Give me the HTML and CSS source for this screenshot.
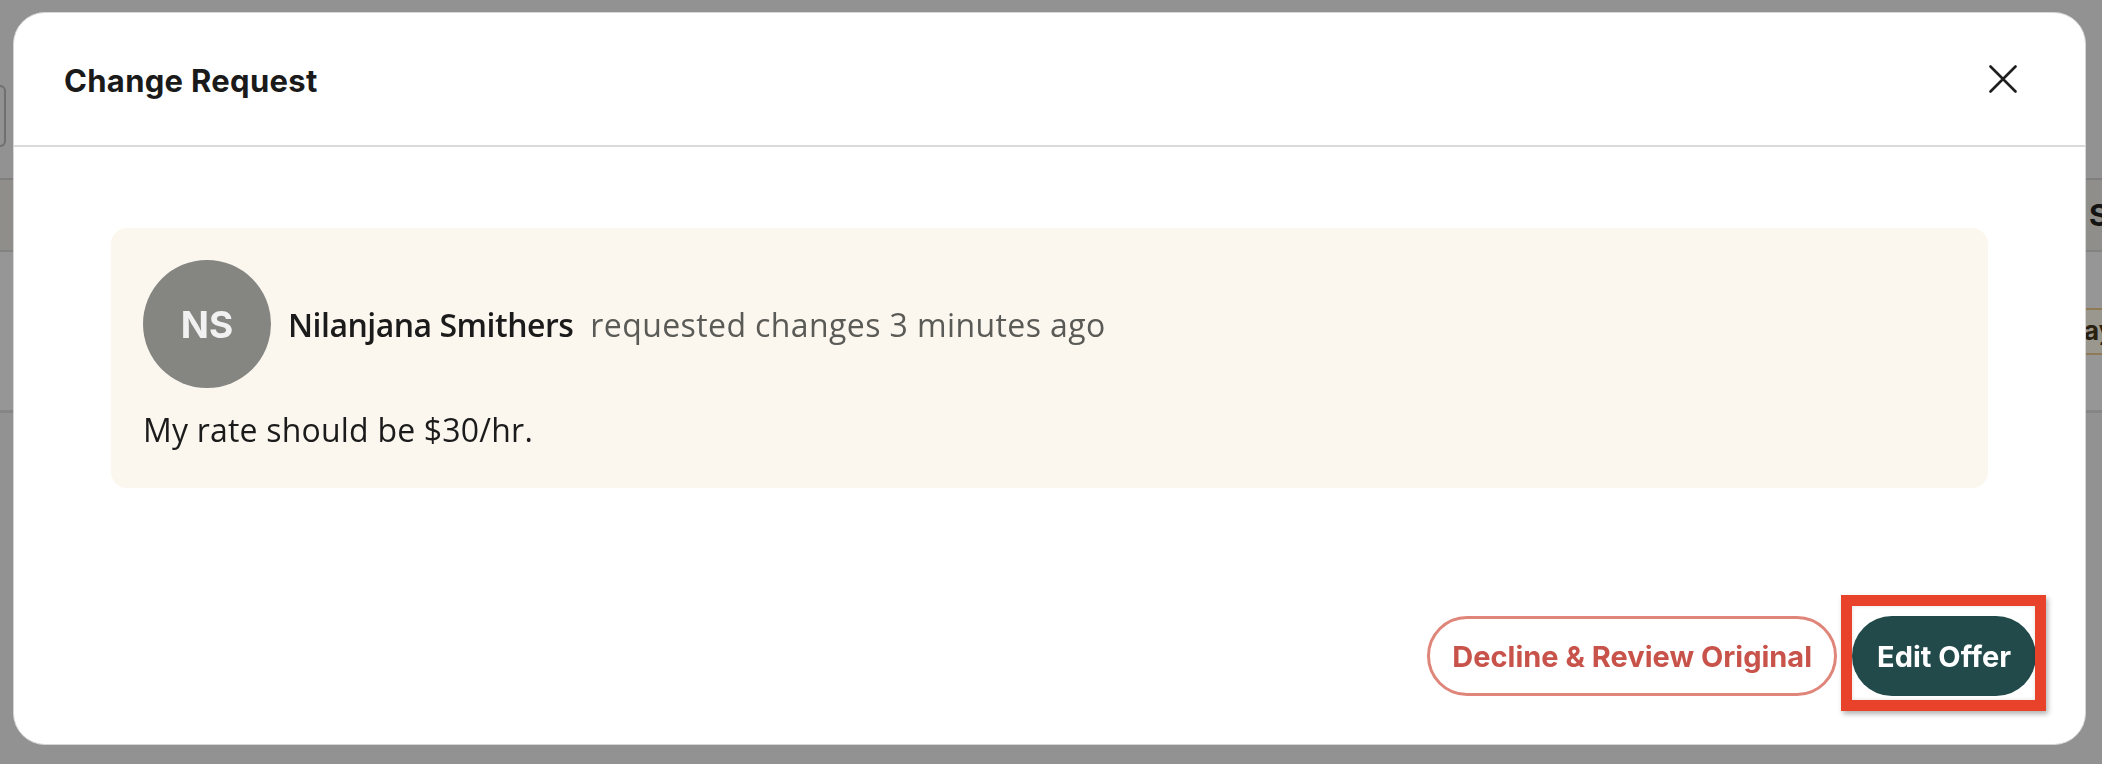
FILE: index.html
```html
<!DOCTYPE html>
<html lang="en">
<head>
<meta charset="utf-8">
<title>Change Request</title>
<link rel="stylesheet" href="styles.css">
</head>
<body>
<div class="page">
  <div class="toolbar"><div class="tool-pill"></div></div>
  <div class="table">
    <div class="thead"><span class="th-right">S</span></div>
    <div class="trow"><span class="tag">ay</span></div>
  </div>
</div>

<div class="modal" role="dialog" aria-labelledby="dlg-title">
  <header class="modal-header">
    <h1 id="dlg-title" class="modal-title">Change Request</h1>
    <button class="close-btn" aria-label="Close">
      <svg width="28" height="28" viewBox="0 0 28 28" fill="none" stroke="#1e1e1e" stroke-width="2.6" stroke-linecap="round"><path d="M1.5 1.5 L26.5 26.5 M26.5 1.5 L1.5 26.5"/></svg>
    </button>
  </header>
  <div class="modal-body">
    <div class="request-card">
      <div class="request-head">
        <div class="avatar">NS</div>
        <span class="author">Nilanjana Smithers</span>
        <span class="meta">requested changes 3 minutes ago</span>
      </div>
      <p class="message">My rate should be $30/hr.</p>
    </div>
  </div>
  <footer class="modal-footer">
    <button class="btn btn-outline">Decline &amp; Review Original</button>
    <div class="highlight-wrap">
      <button class="btn btn-primary">Edit Offer</button>
      <span class="highlight"></span>
    </div>
  </footer>
</div>
</body>
</html>
```
FILE: styles.css
```css
html, body {
  margin: 0;
  padding: 0;
}
body {
  width: 2102px;
  height: 764px;
  overflow: hidden;
  background: #929292;
  font-family: "Open Sans", "Noto Sans", sans-serif;
}

/* underlying page (already dimmed by overlay) */
.page {
  height: 764px;
}
.toolbar {
  height: 178px;
  padding-top: 85px;
  box-sizing: border-box;
}
.tool-pill {
  width: 6px;
  height: 62px;
  border: 2px solid #6f6f6f;
  border-left: none;
  border-radius: 0 10px 10px 0;
  box-sizing: border-box;
}
.table {
  border-top: 2px solid #7f7f7f;
}
.thead {
  height: 70px;
  background: #8f8e8b;
  border-bottom: 2px solid #838383;
  display: flex;
  justify-content: flex-end;
  align-items: center;
}
.th-right {
  font-family: Inter, sans-serif;
  font-weight: 700;
  font-size: 30px;
  color: #141414;
  width: 13px;
  overflow: hidden;
}
.trow {
  height: 161px;
  background: #969696;
  border-bottom: 3px solid #858585;
  display: flex;
  justify-content: flex-end;
  padding-top: 56px;
  box-sizing: border-box;
}
.tag {
  height: 47px;
  width: 18px;
  box-sizing: border-box;
  border-top: 2px solid #8e7b55;
  border-bottom: 2px solid #8e7b55;
  background: #9a978f;
  font-family: Inter, sans-serif;
  font-weight: 700;
  font-size: 26px;
  color: #2a2010;
  line-height: 42px;
  overflow: hidden;
  white-space: nowrap;
}

/* modal */
.modal {
  position: fixed;
  left: 13px;
  top: 12px;
  width: 2073px;
  height: 733px;
  box-sizing: border-box;
  background: #ffffff;
  border: 1px solid #d6d6d6;
  border-radius: 32px;
  display: flex;
  flex-direction: column;
}
.modal-header {
  height: 134px;
  box-sizing: border-box;
  border-bottom: 2px solid #dadada;
  display: flex;
  align-items: center;
  justify-content: space-between;
  padding: 0 68px 0 50px;
  flex-shrink: 0;
}
.modal-title {
  margin: 3px 0 0;
  font-family: Inter, sans-serif;
  font-weight: 700;
  font-size: 31px;
  color: #1a1a1a;
  letter-spacing: 0.3px;
}
.close-btn {
  background: none;
  border: none;
  padding: 0;
  width: 28px;
  height: 28px;
  display: flex;
  cursor: pointer;
}

.modal-body {
  padding: 81px 97px 0;
}
.request-card {
  background: #fbf7ee;
  border-radius: 16px;
  padding: 32px 32px 33px;
  height: 260px;
  box-sizing: border-box;
}
.request-head {
  display: flex;
  align-items: center;
}
.avatar {
  width: 128px;
  height: 128px;
  border-radius: 50%;
  background: #858581;
  color: #f1f1f1;
  font-family: Inter, sans-serif;
  font-weight: 700;
  font-size: 37px;
  display: flex;
  align-items: center;
  justify-content: center;
  flex-shrink: 0;
  margin-right: 17px;
}
.author {
  font-weight: 600;
  font-size: 32px;
  letter-spacing: -0.5px;
  color: #1b1b1b;
  margin-right: 17px;
}
.meta {
  font-size: 32px;
  letter-spacing: 0.4px;
  color: #5a5a57;
}
.message {
  margin: 18px 0 0;
  font-size: 32px;
  line-height: 48px;
  letter-spacing: 0.2px;
  color: #1b1b1b;
}

.modal-footer {
  margin-top: auto;
  display: flex;
  justify-content: flex-end;
  align-items: center;
  gap: 15px;
  padding: 0 49px 48px 0;
}
.btn {
  height: 80px;
  border-radius: 40px;
  font-family: Inter, sans-serif;
  font-weight: 700;
  font-size: 29px;
  box-sizing: border-box;
  cursor: pointer;
}
.btn-outline {
  background: #ffffff;
  border: 3px solid #e0857a;
  color: #c8534a;
  padding: 0 22px;
}
.btn-primary {
  background: #224a4b;
  border: none;
  color: #ffffff;
  padding: 0 25px;
}
.highlight-wrap {
  position: relative;
  display: flex;
}
.highlight {
  position: absolute;
  left: -11px;
  right: -10px;
  top: -21px;
  bottom: -15px;
  border: 11px solid #e8432a;
  box-shadow: 2px 3px 5px rgba(0, 0, 0, 0.3), inset 0 0 4px rgba(0, 0, 0, 0.12);
  pointer-events: none;
}
```
